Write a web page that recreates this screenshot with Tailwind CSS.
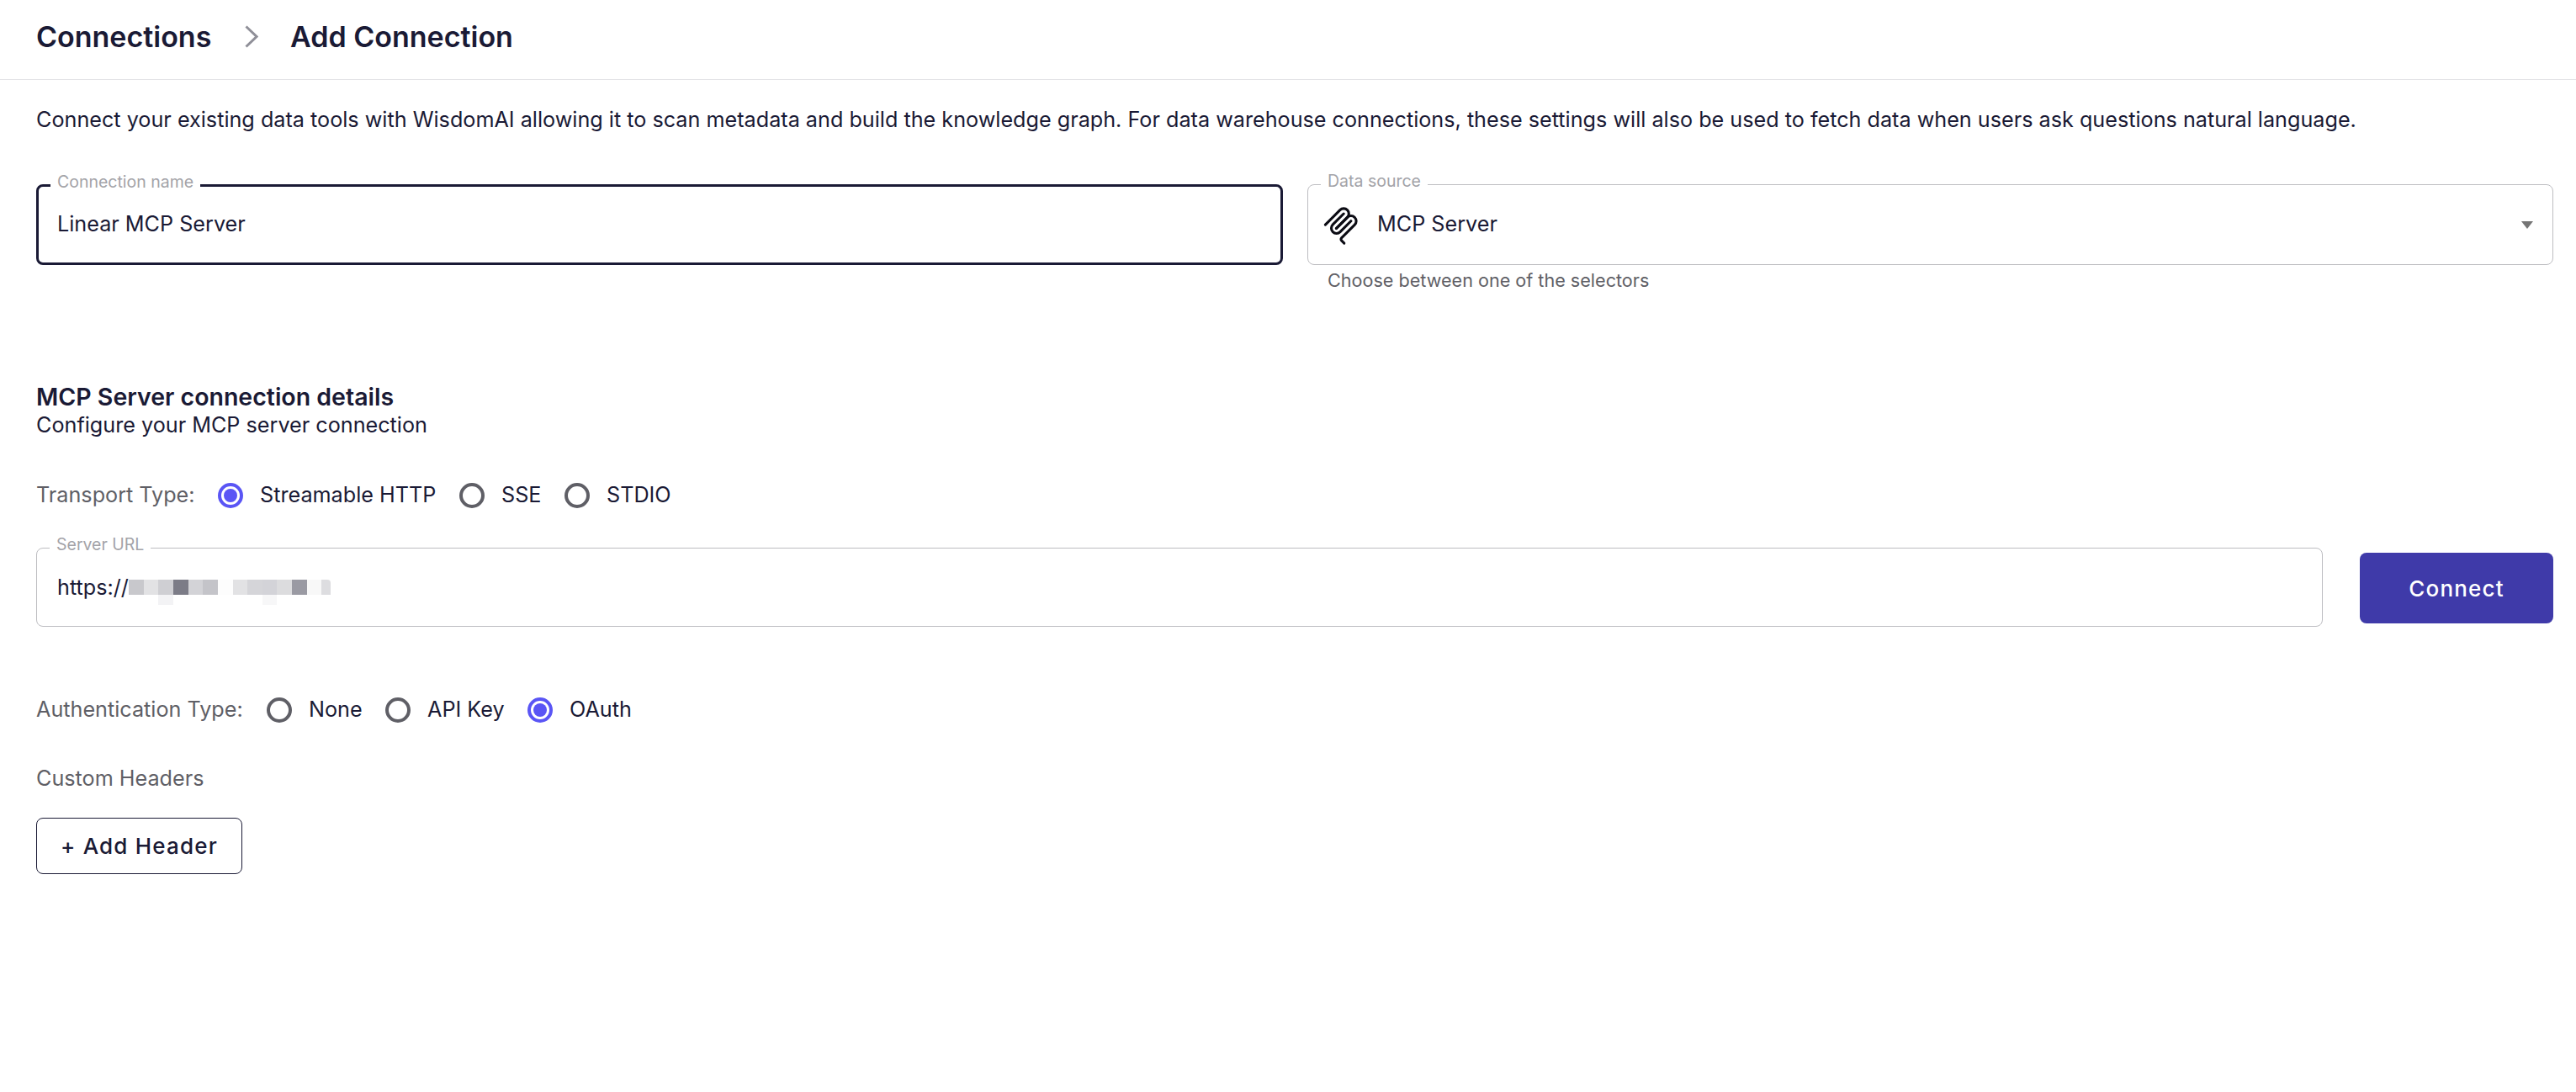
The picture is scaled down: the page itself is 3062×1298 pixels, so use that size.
<!DOCTYPE html>
<html lang="en">
<head>
  <meta charset="UTF-8"/>
  <meta name="viewport" content="width=device-width, initial-scale=1.0"/>
  <title>Add Connection</title>
  <script src="https://cdn.jsdelivr.net/npm/@tailwindcss/browser@4"></script>
</head>
<body class="bg-white text-[#1a1a35] font-['Inter',sans-serif] min-h-screen">

  <!-- Breadcrumb -->
  <header class="h-[95px] border-b border-[#e4e4e7] flex items-center pl-[43px] pb-[8px] text-[34px] font-semibold">
    <span class="w-[248px]">Connections</span>
    <svg class="w-[16px] h-[27px] mr-[38px]" viewBox="0 0 16 27" fill="none"><path d="M1.5 1.5L14 13.5 1.5 25.5" stroke="#8f8f98" stroke-width="3"/></svg>
    <span>Add Connection</span>
  </header>

  <main class="pl-[43px] pr-[27px]">
    <p class="text-[25.2px] leading-[34px] mt-[30px]">Connect your existing data tools with WisdomAI allowing it to scan metadata and build the knowledge graph. For data warehouse connections, these settings will also be used to fetch data when users ask questions natural language.</p>

    <!-- Name + source -->
    <div class="flex gap-[29px] mt-[60px]">
      <div class="w-[1482px] relative h-[96px] border-[3px] border-[#1a1a35] rounded-[8px] flex items-center pl-[22px] text-[25.2px]">
        <label class="absolute left-[14px] -top-[20px] bg-white pl-[8px] pr-[8px] text-[19.5px] leading-[28px] text-[#a3a3a8]">Connection name</label>
        Linear MCP Server
      </div>
      <div class="flex-1">
        <div class="relative h-[96px] border border-[#bdbdc1] rounded-[8px] flex items-center pl-[14px] pr-[23px] text-[25.2px]">
          <label class="absolute left-[15px] -top-[19px] bg-white pl-[8px] pr-[8px] text-[19.5px] leading-[28px] text-[#a3a3a8]">Data source</label>
          <svg class="w-[50px] h-[50px] mr-[18px] shrink-0" viewBox="0 0 195 195" fill="none" stroke="#0c0c14" stroke-width="12" stroke-linecap="round">
            <path d="M25 97.8528L92.8822 29.9706C102.255 20.598 117.451 20.598 126.823 29.9706V29.9706C136.196 39.3431 136.196 54.5391 126.823 63.9117L75.5581 115.177"/>
            <path d="M76.2652 114.47L126.823 63.9117C136.196 54.5391 151.392 54.5391 160.765 63.9117L161.118 64.2652C170.491 73.6378 170.491 88.8338 161.118 98.2063L99.7248 159.6C96.6006 162.724 96.6006 167.789 99.7248 170.913L112.331 183.52"/>
            <path d="M109.853 46.9411L59.6482 97.1457C50.2756 106.518 50.2756 121.714 59.6482 131.087V131.087C69.0208 140.459 84.2167 140.459 93.5893 131.087L143.794 80.8822"/>
          </svg>
          <span>MCP Server</span>
          <svg class="w-[14px] h-[9px] ml-auto" viewBox="0 0 14 9"><path d="M0 0h14L7 9z" fill="#757575"/></svg>
        </div>
        <p class="text-[21.6px] leading-[28px] text-[#5f5f66] pl-[24px] mt-[4px]">Choose between one of the selectors</p>
      </div>
    </div>

    <!-- MCP details -->
    <h2 class="text-[28.5px] leading-[34px] font-semibold mt-[108px]">MCP Server connection details</h2>
    <p class="text-[25.2px] leading-[32px]">Configure your MCP server connection</p>

    <div class="flex items-center h-[32px] mt-[52px] text-[25.2px]">
      <span class="text-[#5f5f66] w-[216px]">Transport Type:</span>
      <span class="w-[30px] h-[30px] rounded-full border-4 border-[#5a55f5] flex items-center justify-center"><span class="w-[16px] h-[16px] rounded-full bg-[#5a55f5]"></span></span>
      <span class="ml-[20px] w-[237px]">Streamable HTTP</span>
      <span class="w-[30px] h-[30px] rounded-full border-4 border-[#5f5f66]"></span>
      <span class="ml-[20px] w-[75px]">SSE</span>
      <span class="w-[30px] h-[30px] rounded-full border-4 border-[#5f5f66]"></span>
      <span class="ml-[20px]">STDIO</span>
    </div>

    <!-- Server URL -->
    <div class="flex items-center gap-[44px] mt-[46px]">
      <div class="relative w-[2718px] h-[94px] border border-[#bdbdc1] rounded-[8px] flex items-center pl-[24px] pt-[2px] text-[25.2px]">
        <label class="absolute left-[15px] -top-[19px] bg-white pl-[8px] pr-[8px] text-[19.5px] leading-[28px] text-[#a3a3a8]">Server URL</label>
        <span>https://</span>
        <span class="relative flex h-[18px] -mt-[2px]">
          <i class="w-[18px] bg-[#c8c8cc]"></i><i class="w-[17px] bg-[#e2e2e4]"></i>
          <i class="w-[18px] bg-[#cfcfd3] relative"><b class="absolute left-0 top-[18px] w-full h-[12px] bg-[#f3f3f5]"></b></i>
          <i class="w-[18px] bg-[#7c7c87]"></i><i class="w-[17px] bg-[#d3d3d7]"></i><i class="w-[18px] bg-[#c4c4c9]"></i>
          <i class="w-[18px] bg-[#fdfdfd]"></i><i class="w-[17px] bg-[#e2e2e4]"></i><i class="w-[18px] bg-[#d5d5d9]"></i>
          <i class="w-[17px] bg-[#d3d3d8] relative"><b class="absolute left-0 top-[18px] w-full h-[12px] bg-[#f7f7f8]"></b></i>
          <i class="w-[18px] bg-[#dcdcde]"></i><i class="w-[18px] bg-[#9a9aa3]"></i><i class="w-[17px] bg-[#f8f8f8]"></i>
          <i class="w-[11px] bg-[#dddde0] rounded-tr-[4px]"></i>
        </span>
      </div>
      <button class="flex-1 h-[84px] mt-[2px] rounded-[8px] bg-[#3f3aa9] text-white text-[26px] font-medium tracking-[1.2px]">Connect</button>
    </div>

    <!-- Auth -->
    <div class="flex items-center h-[32px] mt-[83px] text-[25.2px]">
      <span class="text-[#5f5f66] w-[274px]">Authentication Type:</span>
      <span class="w-[30px] h-[30px] rounded-full border-4 border-[#5f5f66]"></span>
      <span class="ml-[20px] w-[91px]">None</span>
      <span class="w-[30px] h-[30px] rounded-full border-4 border-[#5f5f66]"></span>
      <span class="ml-[20px] w-[119px]">API Key</span>
      <span class="w-[30px] h-[30px] rounded-full border-4 border-[#5a55f5] flex items-center justify-center"><span class="w-[16px] h-[16px] rounded-full bg-[#5a55f5]"></span></span>
      <span class="ml-[20px]">OAuth</span>
    </div>

    <p class="text-[25.2px] leading-[32px] text-[#5f5f66] mt-[49px]">Custom Headers</p>
    <button class="block w-[245px] h-[67px] mt-[31px] border border-[#1a1a35] rounded-[8px] text-[26px] font-medium tracking-[1.2px]">+ Add Header</button>
  </main>
</body>
</html>
